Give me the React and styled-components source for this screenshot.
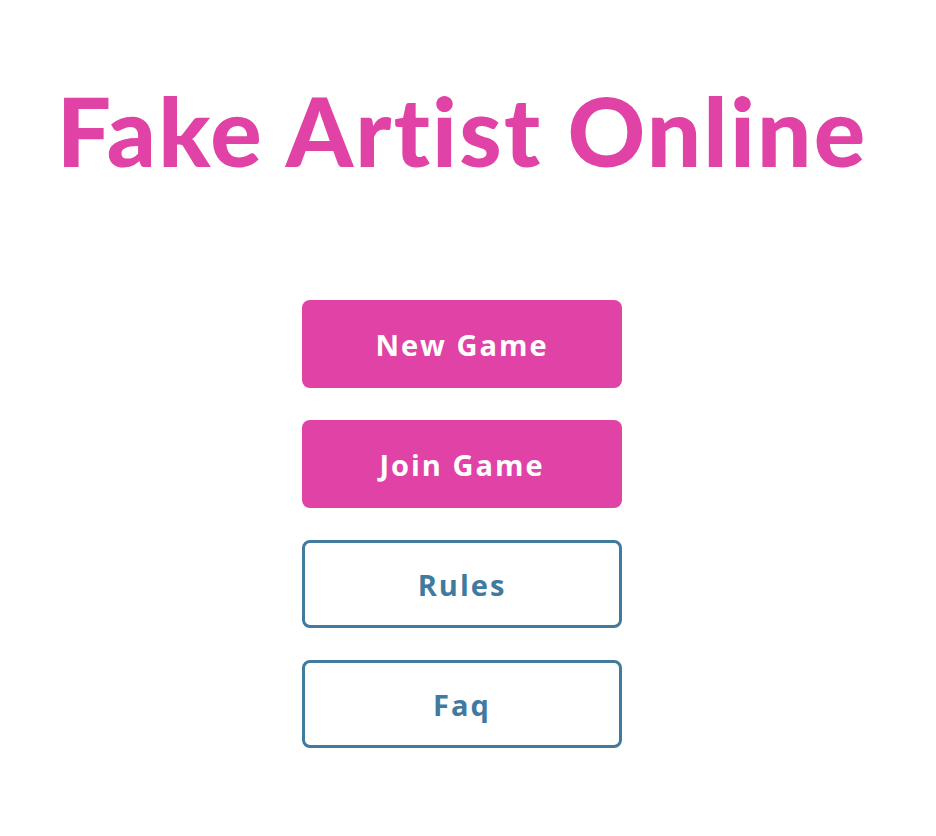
import React from 'react';
import styled, { createGlobalStyle } from 'styled-components';

const GlobalStyle = createGlobalStyle`
  html, body {
    margin: 0;
    padding: 0;
    background: #ffffff;
  }
`;

const Page = styled.main`
  display: flex;
  flex-direction: column;
  align-items: center;
  width: 924px;
  min-height: 836px;
  padding-top: 76px;
  box-sizing: border-box;
`;

const Title = styled.h1`
  margin: 0;
  font-family: 'Lato', 'Open Sans', sans-serif;
  font-weight: 900;
  font-size: 96px;
  line-height: 108px;
  color: #e042a5;
  letter-spacing: 2.2px;
  white-space: nowrap;
`;

const Menu = styled.nav`
  display: flex;
  flex-direction: column;
  gap: 32px;
  margin-top: 116px;
`;

const MenuButton = styled.button`
  width: 320px;
  height: 88px;
  box-sizing: border-box;
  border-radius: 8px;
  font-family: 'Open Sans', 'Lato', sans-serif;
  font-weight: 700;
  font-size: 29px;
  letter-spacing: 2px;
  cursor: pointer;
  background: ${({ $outline }) => ($outline ? '#ffffff' : '#e042a5')};
  color: ${({ $outline }) => ($outline ? '#417a9f' : '#ffffff')};
  border: ${({ $outline }) => ($outline ? '3px solid #417a9f' : 'none')};
`;

const buttons = [
  { label: 'New Game' },
  { label: 'Join Game' },
  { label: 'Rules', outline: true },
  { label: 'Faq', outline: true },
];

export default function App() {
  return (
    <>
      <GlobalStyle />
      <Page>
        <Title>Fake Artist Online</Title>
        <Menu>
          {buttons.map(b => (
            <MenuButton key={b.label} $outline={b.outline}>
              {b.label}
            </MenuButton>
          ))}
        </Menu>
      </Page>
    </>
  );
}
